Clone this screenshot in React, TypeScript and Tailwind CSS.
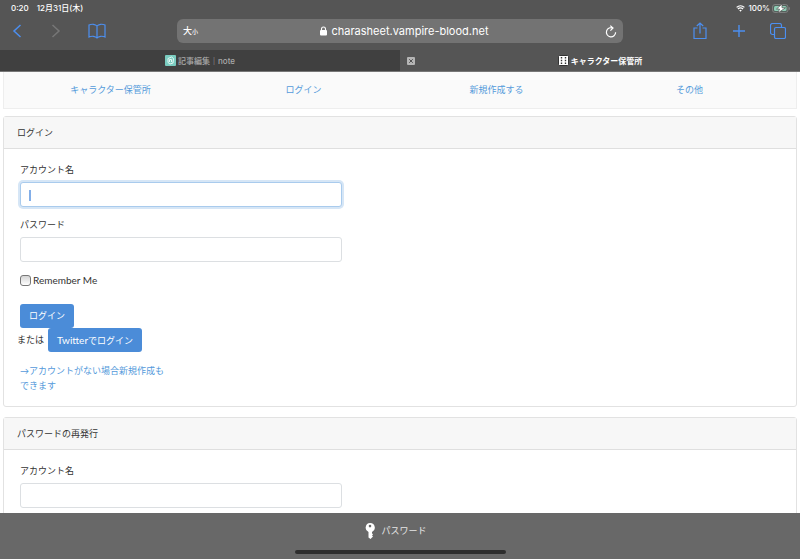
import type { ReactNode } from "react";

const navLinks = ["キャラクター保管所", "ログイン", "新規作成する", "その他"];

const StatusBar = () => (
  <div className="flex h-4 items-center justify-between pl-[11px] pr-[10px] text-[8px] font-medium text-white">
    <div className="flex gap-2">
      <time>0:20</time>
      <span>12月31日(木)</span>
    </div>
    <div className="flex items-center gap-[3px]">
      <svg className="h-[7px] w-[9px]" viewBox="0 0 18 14" fill="white">
        <path d="M9 13.5 6.4 10.6a4 4 0 0 1 5.2 0Z" />
        <path
          d="M3.8 8a7.6 7.6 0 0 1 10.4 0M1.2 4.8a11.5 11.5 0 0 1 15.6 0"
          fill="none"
          stroke="white"
          strokeWidth="2.4"
        />
      </svg>
      <span>100%</span>
      <svg className="-ml-px h-[9px] w-[18px]" viewBox="0 0 36 18">
        <rect x="1" y="1" width="31" height="16" rx="5" fill="#56605c" stroke="#8a8a8a" strokeWidth="1.5" />
        <rect x="4" y="4" width="25" height="10" rx="3" fill="#8fcdb6" />
        <path d="M34.500 6.500v5" stroke="#8a8a8a" strokeWidth="2" />
        <path d="m20 0-11 10h6l-3 8L27 7.500h-7Z" fill="white" stroke="#555" strokeWidth="1.5" />
      </svg>
    </div>
  </div>
);

const ToolButton = ({ label, children }: { label: string; children: ReactNode }) => (
  <button type="button" aria-label={label} className="flex size-[18px] items-center justify-center text-[#4c8ff0]">
    {children}
  </button>
);

const Toolbar = () => (
  <div className="flex h-[34px] items-center pb-1">
    <div className="flex w-[177px] items-center gap-[21px] pl-2">
      <ToolButton label="戻る">
        <svg className="h-[14px] w-[10px]" viewBox="0 0 10 14" fill="none" stroke="currentColor" strokeWidth="1.5">
          <path d="M8.5 1 2 7l6.500 6" />
        </svg>
      </ToolButton>
      <ToolButton label="進む">
        <svg className="h-[14px] w-[10px]" viewBox="0 0 10 14" fill="none" stroke="#777" strokeWidth="1.5">
          <path d="M1.500 1 8 7l-6.500 6" />
        </svg>
      </ToolButton>
      <div className="pl-[2px]">
        <ToolButton label="ブックマーク">
          <svg className="h-[16px] w-[18px]" viewBox="0 0 18 16" fill="none" stroke="currentColor" strokeWidth="1.2">
            <path d="M9 3C7.500 1 3.500.8 1 2v12c2.500-1.200 6.500-1 8 1 1.500-2 5.500-2.200 8-1V2c-2.500-1.200-6.500-1-8 1Zm0 0v12" />
          </svg>
        </ToolButton>
      </div>
    </div>
    <div className="flex h-6 flex-1 items-center rounded-md bg-[#737373] px-[6px] text-white">
      <button type="button" aria-label="表示設定" className="flex w-5 items-baseline text-[9px] font-medium">
        大<span className="text-[6px]">小</span>
      </button>
      <div className="flex flex-1 items-center justify-center gap-[5px] text-[11px]">
        <svg className="h-[10px] w-[7px]" viewBox="0 0 7 10">
          <rect y="4" width="7" height="5.500" rx="1" fill="white" />
          <path d="M1.500 4.500V3a2 2 0 0 1 4 0v1.500" fill="none" stroke="white" strokeWidth="1.1" />
        </svg>
        <span>charasheet.vampire-blood.net</span>
      </div>
      <button type="button" aria-label="再読み込み">
        <svg className="h-[13px] w-3" viewBox="0 0 12 13" fill="none" stroke="white" strokeWidth="1.200">
          <path d="M8 3.100A4.600 4.600 0 1 0 10.600 7.200M5.300.6 8 3.100 5.400 5.700" />
        </svg>
      </button>
    </div>
    <div className="flex w-[177px] items-center justify-end gap-[21px] pr-[13px]">
      <ToolButton label="共有">
        <svg className="h-[18px] w-[14px]" viewBox="0 0 14 18" fill="none" stroke="currentColor" strokeWidth="1.200">
          <path d="M4.500 6H1v10.500h12V6H9.500M7 11.500V1M3.800 4 7 1l3.200 3" />
        </svg>
      </ToolButton>
      <ToolButton label="新規タブ">
        <svg className="h-3 w-3" viewBox="0 0 12 12" fill="none" stroke="currentColor" strokeWidth="1.400">
          <path d="M6 0v12M0 6h12" />
        </svg>
      </ToolButton>
      <ToolButton label="タブ一覧">
        <svg className="h-4 w-4" viewBox="0 0 16 16" fill="none" stroke="currentColor" strokeWidth="1.200">
          <rect x="4.500" y="4.500" width="11" height="11" rx="1.500" />
          <path d="M4.500 11.500H2.500a2 2 0 0 1-2-2v-7a2 2 0 0 1 2-2h7a2 2 0 0 1 2 2v2" />
        </svg>
      </ToolButton>
    </div>
  </div>
);

const TabBar = () => (
  <div className="grid h-[22px] grid-cols-2 border-b border-[#777] text-[8px]">
    <button type="button" className="flex items-center justify-center gap-[2px] bg-[#404040] font-medium text-[#aaa]">
      <svg className="size-[11px]" viewBox="0 0 11 11">
        <rect width="11" height="11" rx="1" fill="#7accc0" />
        <path d="M3 3.500 6.500 2 8.500 3.500 8 8 5 9 3 7.500ZM4.500 7V4.500h2V7" fill="none" stroke="#e5f7f4" />
      </svg>
      <span>記事編集｜note</span>
    </button>
    <div className="flex items-center pl-[7px] pr-[15px] font-semibold text-white">
      <button type="button" aria-label="タブを閉じる">
        <svg className="size-2" viewBox="0 0 8 8">
          <rect width="8" height="8" rx="1" fill="#b5b5b5" />
          <path d="m2.200 2.200 3.600 3.600m0-3.600L2.200 5.800" stroke="#505050" />
        </svg>
      </button>
      <button type="button" className="flex flex-1 items-center justify-center gap-[2px]">
        <svg className="size-[11px]" viewBox="0 0 11 11">
          <rect x=".5" y=".5" width="10" height="10" rx="1" fill="white" stroke="#333" />
          <path d="M3.500 2v7.500M7.500 2v7.500" stroke="#333" strokeWidth="1.400" strokeDasharray="1.500 1.300" />
        </svg>
        <span>キャラクター保管所</span>
      </button>
    </div>
  </div>
);

const Card = ({ title, children }: { title: string; children: ReactNode }) => (
  <section className="rounded-[3px] border border-[#e2e2e2] bg-white">
    <h2 className="flex h-8 items-center border-b border-[#dfdfdf] bg-[#f7f7f7] px-[13px]">{title}</h2>
    <div className="px-[13px] pb-[13px] pt-[14px]">{children}</div>
  </section>
);

type FieldProps = {
  id: string;
  label: string;
  type?: string;
  active?: boolean;
};

const Field = ({ id, label, type = "text", active }: FieldProps) => (
  <div className="mb-[11px] max-w-[325px] pl-[3px]">
    <label htmlFor={id} className="mb-[5px] block leading-[14px]">
      {label}
    </label>
    <div className="relative">
      <input
        id={id}
        type={type}
        className={`block h-[25px] w-full rounded-[3px] border bg-white px-2 outline-none ${
          active ? "border-[#a9cbed] ring-2 ring-[#d6e6f6]" : "border-[#dcdfe2]"
        }`}
      />
      {active && <span className="absolute left-[9px] top-2 h-[11px] w-[2px] bg-[#82aee8]" />}
    </div>
  </div>
);

const LoginForm = () => (
  <form>
    <Field id="login-account" label="アカウント名" active />
    <Field id="login-password" label="パスワード" type="password" />
    <div className="flex items-center gap-[2px] pl-[3px]">
      <input
        id="remember"
        type="checkbox"
        className="size-[11px] appearance-none rounded-[3px] border border-[#777] bg-linear-to-b from-[#d5d5d5] to-white"
      />
      <label htmlFor="remember" className="text-[10px] leading-[14px]">
        Remember Me
      </label>
    </div>
    <button type="submit" className="ml-[3px] mt-[17px] block h-6 rounded-[3px] bg-[#4b8cd8] px-[9px] text-white">
      ログイン
    </button>
    <div className="flex items-center gap-1">
      <span>または</span>
      <button type="button" className="h-6 rounded-[3px] bg-[#4b8cd8] px-[9px] text-white">
        <span className="text-[10px]">Twitter</span>でログイン
      </button>
    </div>
    <a href="#register" className="ml-[3px] mt-[11px] block w-[152px] leading-[15px] text-[#559adb]">
      →アカウントがない場合新規作成もできます
    </a>
  </form>
);

export default function App() {
  return (
    <div
      lang="ja"
      className="flex h-dvh flex-col overflow-hidden bg-white font-['Inter','Noto_Sans_CJK_JP',sans-serif]"
    >
      <header className="shrink-0 bg-[#555]">
        <StatusBar />
        <Toolbar />
        <TabBar />
      </header>
      <main className="min-h-0 flex-1 overflow-hidden px-[3px] font-['Lato','Noto_Sans_CJK_JP',sans-serif] text-[9px] text-[#333]">
        <nav className="mb-[7px] grid h-[37px] grid-cols-4 items-center border border-t-0 border-[#eee] bg-[#fafafa] px-[10px] text-center">
          {navLinks.map((link) => (
            <a key={link} href="#" className="text-[#559adb]">
              {link}
            </a>
          ))}
        </nav>
        <div className="flex flex-col gap-[10px]">
          <Card title="ログイン">
            <LoginForm />
          </Card>
          <Card title="パスワードの再発行">
            <form>
              <Field id="reset-account" label="アカウント名" />
            </form>
          </Card>
        </div>
      </main>
      <footer className="flex h-[46px] shrink-0 flex-col items-center justify-between bg-[#686868] pb-[5px] pt-[9px]">
        <button
          type="button"
          className="flex items-center gap-[6px] pr-2 text-[9px] leading-[18px] text-[#e6e6e6]"
        >
          <svg className="h-4 w-[10px]" viewBox="0 0 10 16" fill="white">
            <path
              fillRule="evenodd"
              d="M5 0a4.700 4.700 0 0 1 2 9v1.200L8 11.400 7 12.500l1 1L5.500 16 3.500 14.500V9A4.700 4.700 0 0 1 5 0Zm0 1.800a1.300 1.300 0 1 0 0 2.600 1.300 1.300 0 0 0 0-2.600Z"
            />
          </svg>
          パスワード
        </button>
        <div className="h-[4px] w-[211px] rounded-full bg-[#2d2d2d]" />
      </footer>
    </div>
  );
}
